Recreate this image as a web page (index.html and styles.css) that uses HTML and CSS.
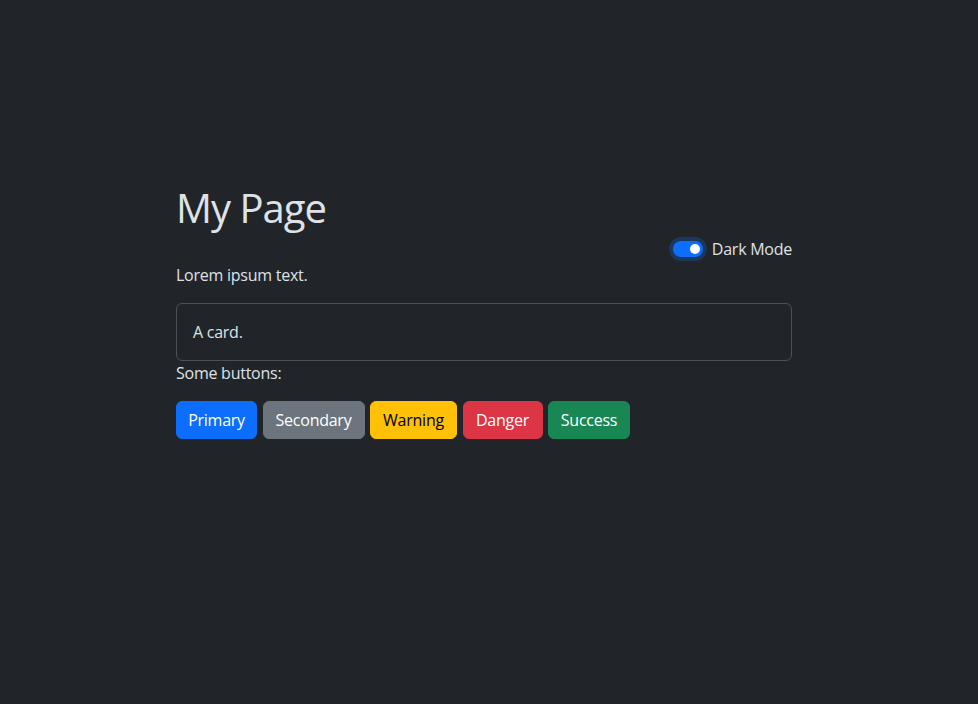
FILE: index.html
```html
<!DOCTYPE html>
<html lang="en">
<head>
<meta charset="utf-8">
<title>My Page</title>
<link rel="stylesheet" href="styles.css">
</head>
<body>
<div class="container">
  <h1 class="title">My Page</h1>
  <div class="switch-row">
    <label class="switch">
      <span class="track"><span class="knob"></span></span>
      <span class="switch-label">Dark Mode</span>
    </label>
  </div>
  <p class="text">Lorem ipsum text.</p>
  <div class="card">A card.</div>
  <p class="text text-buttons">Some buttons:</p>
  <div class="buttons">
    <button class="btn btn-primary">Primary</button>
    <button class="btn btn-secondary">Secondary</button>
    <button class="btn btn-warning">Warning</button>
    <button class="btn btn-danger">Danger</button>
    <button class="btn btn-success">Success</button>
  </div>
</div>
</body>
</html>
```

FILE: styles.css
```css
html, body {
  margin: 0;
  padding: 0;
  background: #212529;
  color: #dee2e6;
  font-family: "Open Sans", "Noto Sans", sans-serif;
  font-size: 16px;
  line-height: 24px;
  letter-spacing: -0.25px;
  height: 100%;
}

.container {
  width: 616px;
  margin-left: 176px;
  padding-top: 181px;
}

.title {
  margin: 0 0 5px 0;
  padding-top: 3px;
  font-size: 40px;
  line-height: 48px;
  font-weight: 400;
  letter-spacing: -1px;
  color: #dee2e6;
}

.switch-row {
  display: flex;
  justify-content: flex-end;
  height: 24px;
  margin-bottom: 2px;
}

.switch {
  display: flex;
  align-items: center;
  gap: 9px;
}

.track {
  width: 30px;
  height: 16px;
  border-radius: 8px;
  background: #0d6efd;
  box-shadow: 0 0 0 4px rgba(13, 110, 253, 0.25);
  display: flex;
  align-items: center;
  justify-content: flex-end;
  padding: 0 3px;
  box-sizing: border-box;
}

.knob {
  width: 10px;
  height: 10px;
  border-radius: 50%;
  background: #fff;
}

.text {
  margin: 0 0 16px 0;
}

.card {
  border: 1px solid #495057;
  border-radius: 6px;
  padding: 16px;
  height: 24px;
}

.text-buttons {
  margin-top: 0;
}

.buttons {
  display: flex;
  gap: 5.5px;
}

.btn {
  font-family: inherit;
  font-size: 16px;
  line-height: 24px;
  letter-spacing: -0.25px;
  padding: 6px 0;
  border: 1px solid transparent;
  border-radius: 6px;
  color: #fff;
  cursor: pointer;
  text-align: center;
}

.btn-primary { background: #0d6efd; border-color: #0d6efd; width: 81px; }
.btn-secondary { background: #6c757d; border-color: #6c757d; width: 102px; }
.btn-warning { background: #ffc107; border-color: #ffc107; color: #000; width: 87px; }
.btn-danger { background: #dc3545; border-color: #dc3545; width: 80px; }
.btn-success { background: #198754; border-color: #198754; width: 82px; }
```
